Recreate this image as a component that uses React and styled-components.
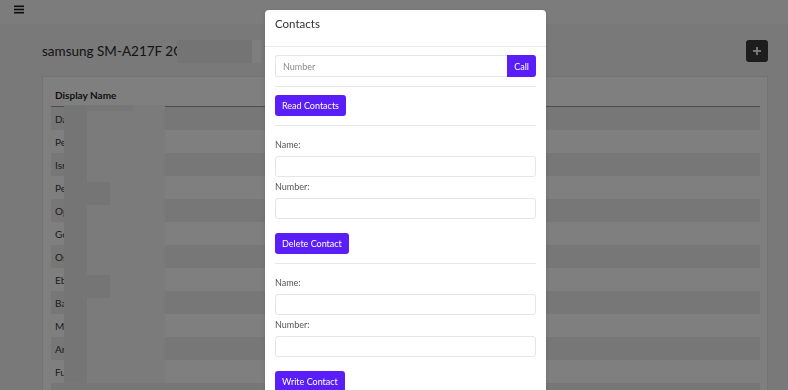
import React from "react";
import styled, { createGlobalStyle } from "styled-components";

const Global = createGlobalStyle`
  html, body { margin: 0; padding: 0; }
  body {
    font-family: Lato, "Open Sans", "Liberation Sans", sans-serif;
    background: #f3f3f3;
    color: #212529;
    width: 788px;
    height: 390px;
    overflow: hidden;
  }
  * { box-sizing: border-box; }
`;

const Page = styled.div`
  width: 788px;
  height: 390px;
  overflow: hidden;
  background: #f3f3f3;
`;

const TopBar = styled.div`
  height: 24px;
  background: #f9f9f9;
  display: flex;
  align-items: flex-start;
  padding-left: 8px;
`;

const MenuButton = styled.div`
  width: 22px;
  height: 18px;
  display: flex;
  align-items: center;
  justify-content: center;
  color: #1a1a1a;
`;

const Main = styled.div`
  padding: 16px 20px 0 42px;
`;

const TitleRow = styled.div`
  display: flex;
  align-items: center;
  justify-content: space-between;
  height: 22px;
`;

const Title = styled.h1`
  margin: 0;
  font-size: 13.5px;
  font-weight: 400;
  color: #2a2a2a;
  display: flex;
  align-items: center;
  white-space: nowrap;
`;

const TitleRedact = styled.span`
  display: inline-block;
  width: ${(p) => p.$w}px;
  height: 23px;
  margin-left: ${(p) => p.$ml || 0}px;
  margin-right: ${(p) => p.$mr || 0}px;
  background: ${(p) => p.$c};
`;

const AddButton = styled.div`
  width: 22px;
  height: 22px;
  border-radius: 3px;
  background: #3a3a3a;
  display: flex;
  align-items: center;
  justify-content: center;
`;

const Card = styled.div`
  margin-top: 14px;
  background: #ffffff;
  border: 1px solid #e6e6e6;
  padding: 7px 7px 0 8px;
  height: 330px;
  position: relative;
`;

const Table = styled.div`
  display: flex;
  flex-direction: column;
`;

const HeadRow = styled.div`
  height: 23px;
  display: flex;
  align-items: center;
  padding-left: 4px;
  font-size: 10px;
  font-weight: 700;
  color: #1f1f1f;
  border-bottom: 1px solid #9a9a9a;
`;

const Row = styled.div`
  height: 23px;
  display: flex;
  align-items: center;
  padding-left: 4px;
  font-size: 10px;
  color: #3a3a3a;
  background: ${(p) => (p.$striped ? "#eeeeee" : "transparent")};
`;

const Redact = styled.div`
  position: absolute;
  left: ${(p) => p.$x}px;
  top: ${(p) => p.$y}px;
  width: ${(p) => p.$w}px;
  height: ${(p) => p.$h}px;
  background: ${(p) => p.$c};
`;

const Backdrop = styled.div`
  position: fixed;
  inset: 0;
  background: rgba(0, 0, 0, 0.5);
`;

const Modal = styled.div`
  position: fixed;
  left: 265px;
  top: 10px;
  width: 281px;
  height: 400px;
  background: #ffffff;
  border-radius: 4px;
  box-shadow: 0 1px 4px rgba(0, 0, 0, 0.15);
  font-family: Lato, "Open Sans", sans-serif;
`;

const ModalHeader = styled.div`
  height: 37px;
  padding: 6px 10px 0 10px;
  line-height: 16px;
  border-bottom: 1px solid #e9ecef;
  font-size: 11.5px;
  color: #333;
`;

const ModalBody = styled.div`
  padding: 8px 10px 0 10px;
  display: flex;
  flex-direction: column;
`;

const InputGroup = styled.div`
  display: flex;
  height: 22px;
`;

const GroupInput = styled.div`
  flex: 1;
  border: 1px solid #e3e6ea;
  border-right: none;
  border-radius: 3px 0 0 3px;
  display: flex;
  align-items: center;
  padding-left: 7px;
  font-size: 9px;
  color: #8a8a8a;
`;

const Button = styled.div`
  align-self: flex-start;
  display: flex;
  align-items: center;
  justify-content: center;
  height: ${(p) => p.$h || 21}px;
  padding: 0 ${(p) => p.$px || 7}px;
  margin-top: ${(p) => p.$mt || 0}px;
  background: #5a1ff9;
  color: #ffffff;
  font-size: 9px;
  border-radius: ${(p) => (p.$joined ? "0 3px 3px 0" : "3px")};
  white-space: nowrap;
`;

const Divider = styled.div`
  height: 1px;
  flex-shrink: 0;
  background: #e6e8eb;
  margin: ${(p) => p.$mt}px 0 ${(p) => p.$mb}px 0;
`;

const Label = styled.div`
  font-size: 9px;
  line-height: 12px;
  color: #555;
  margin-top: ${(p) => p.$mt}px;
  margin-bottom: 5px;
`;

const Field = styled.div`
  height: 21px;
  flex-shrink: 0;
  border: 1px solid #e3e6ea;
  border-radius: 3px;
`;

const rows = ["Da", "Pe", "Isr", "Pe", "Op", "Go", "Os", "Eb", "Ba", "M", "Ar", "Fu", "Ga"];

function MenuIcon() {
  return (
    <svg width="10" height="9" viewBox="0 0 10 9">
      <rect x="0" y="0.5" width="10" height="1.6" fill="#1a1a1a" />
      <rect x="0" y="3.7" width="10" height="1.6" fill="#1a1a1a" />
      <rect x="0" y="6.9" width="10" height="1.6" fill="#1a1a1a" />
    </svg>
  );
}

function PlusIcon() {
  return (
    <svg width="8" height="8" viewBox="0 0 8 8">
      <rect x="3.1" y="0" width="1.8" height="8" fill="#ffffff" />
      <rect x="0" y="3.1" width="8" height="1.8" fill="#ffffff" />
    </svg>
  );
}

function ContactForm({ action }) {
  return (
    <>
      <Label $mt={13}>Name:</Label>
      <Field />
      <Label $mt={4}>Number:</Label>
      <Field />
      <Button $mt={14}>{action}</Button>
    </>
  );
}

export default function App() {
  return (
    <>
      <Global />
      <Page>
        <TopBar>
          <MenuButton>
            <MenuIcon />
          </MenuButton>
        </TopBar>
        <Main>
          <TitleRow>
            <Title>
              samsung SM-A217F 2C
              <TitleRedact $w={75} $ml={-5} $c="#e8e8e8" />
              <TitleRedact $w={9} $mr={3} $c="#fdfdfd" />
              7
            </Title>
            <AddButton>
              <PlusIcon />
            </AddButton>
          </TitleRow>
          <Card>
            <Table>
              <HeadRow>Display Name</HeadRow>
              {rows.map((r, i) => (
                <Row key={i} $striped={i % 2 === 0}>
                  {r}
                </Row>
              ))}
            </Table>
            <Redact $x={21} $y={28} $w={23} $h={278} $c="#ebebeb" />
            <Redact $x={44} $y={28} $w={78} $h={278} $c="#f7f7f7" />
            <Redact $x={44} $y={28} $w={46} $h={6} $c="#efefef" />
            <Redact $x={44} $y={105} $w={23} $h={23} $c="#eaeaea" />
            <Redact $x={44} $y={198} $w={23} $h={23} $c="#eaeaea" />
          </Card>
        </Main>
      </Page>
      <Backdrop />
      <Modal>
        <ModalHeader>Contacts</ModalHeader>
        <ModalBody>
          <InputGroup>
            <GroupInput>Number</GroupInput>
            <Button $h={22} $px={7} $joined>
              Call
            </Button>
          </InputGroup>
          <Divider $mt={9} $mb={8} />
          <Button>Read Contacts</Button>
          <Divider $mt={9} $mb={0} />
          <ContactForm action="Delete Contact" />
          <Divider $mt={9} $mb={0} />
          <ContactForm action="Write Contact" />
        </ModalBody>
      </Modal>
    </>
  );
}
